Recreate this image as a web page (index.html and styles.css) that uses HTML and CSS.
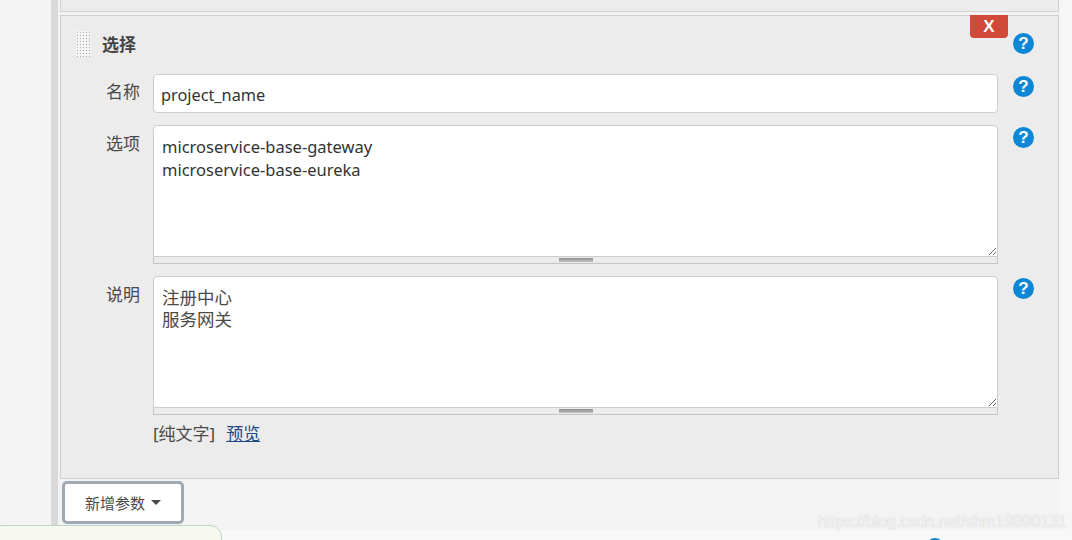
FILE: index.html
```html
<!DOCTYPE html>
<html lang="zh-CN">
<head>
  <meta charset="UTF-8" />
  <title>选择参数</title>
  <link rel="stylesheet" href="styles.css">
</head>
<body>

  <div class="page">
    <div class="rail"></div>

    <div class="main">
      <div class="prev-card"></div>

      <div class="card">
        <button class="delete-btn">X</button>

        <div class="card-head">
          <div class="handle"></div>
          <div class="card-title">选择</div>
          <span class="help">?</span>
        </div>

        <div class="row row-name">
          <label class="row-label">名称</label>
          <input class="field" type="text" value="project_name" />
          <span class="help">?</span>
        </div>

        <div class="row row-choices">
          <label class="row-label">选项</label>
          <div class="area-wrap">
            <textarea class="area">microservice-base-gateway
microservice-base-eureka</textarea>
            <div class="area-grip"><i></i></div>
          </div>
          <span class="help">?</span>
        </div>

        <div class="row row-desc">
          <label class="row-label">说明</label>
          <div class="area-wrap">
            <textarea class="area area-cjk">注册中心
服务网关</textarea>
            <div class="area-grip"><i></i></div>
          </div>
          <span class="help">?</span>
        </div>

        <div class="row row-links">
          <span></span>
          <div class="links">[纯文字]<a href="#">预览</a></div>
        </div>
      </div>

      <button class="add-btn">新增参数<span class="caret"></span></button>
    </div>

    <div class="right-edge"></div>
  </div>

  <div class="footer"><span class="footer-dot"></span></div>
  <div class="notice"></div>
  <div class="watermark">https://blog.csdn.net/shm19990131</div>

</body>
</html>
```

FILE: styles.css
```css
html, body {
  margin: 0;
  padding: 0;
  overflow: hidden;
}

body {
  width: 1072px;
  height: 540px;
  position: relative;
  background: #f8f8f8;
  font-family: "Noto Sans", "Noto Sans CJK SC", sans-serif;
  color: #333;
}

.page {
  display: flex;
  height: 530px;
  background: #f3f3f3;
}

.rail {
  width: 51px;
  background: #f4f4f4;
  border-right: 7px solid #d9d9d9;
}

.main {
  width: 1001px;
  padding-left: 2px;
  box-sizing: border-box;
}

.right-edge {
  width: 12px;
  margin-left: 1px;
  background: #f6f6f6;
}

.prev-card {
  height: 11px;
  background: #ececec;
  border: 1px solid #d2d2d2;
  border-top: none;
}

.card {
  position: relative;
  height: 464px;
  margin-top: 3px;
  box-sizing: border-box;
  background: #ececec;
  border: 1px solid #d0d0d0;
}

.delete-btn {
  position: absolute;
  top: -1px;
  right: 50px;
  width: 38px;
  height: 23px;
  padding: 0;
  border: none;
  border-radius: 0 0 4px 4px;
  background: #d24939;
  color: #fff;
  font-family: "Liberation Sans", sans-serif;
  font-size: 17px;
  font-weight: bold;
}

.card-head {
  display: flex;
  align-items: center;
  height: 54px;
  margin-bottom: 4px;
  padding-left: 15px;
}

.handle {
  width: 15px;
  height: 26px;
  margin-top: 2px;
  background-color: #f4f4f4;
  background-image: radial-gradient(circle, #a8a8a8 1px, transparent 1px);
  background-size: 3px 3px;
}

.card-title {
  margin-left: 11px;
  font-size: 17px;
  font-weight: bold;
  color: #444;
}

.card-head .help {
  margin-left: auto;
  margin-right: 24px;
}

.row {
  display: grid;
  grid-template-columns: 80px 845px 60px;
  column-gap: 12px;
  align-items: start;
}

.row .help {
  margin-top: 2px;
  margin-left: 3px;
}

.row-choices,
.row-desc {
  margin-top: 12px;
}

.row-label {
  margin-right: 1px;
  text-align: right;
  font-size: 17px;
  line-height: 36px;
  color: #4a4a4a;
}

.row-choices .row-label,
.row-desc .row-label {
  line-height: 38px;
}

.field {
  display: block;
  width: 845px;
  height: 39px;
  box-sizing: border-box;
  padding: 3px 7px 0;
  border: 1px solid #cdcdcd;
  border-radius: 4px;
  background: #fff;
  color: #333;
  font-family: inherit;
  font-size: 16.3px;
  outline: none;
}

.area-wrap {
  width: 845px;
}

.area {
  display: block;
  width: 845px;
  height: 132px;
  box-sizing: border-box;
  padding: 9px 8px;
  border: 1px solid #cdcdcd;
  border-radius: 4px 4px 0 0;
  background: #fff;
  color: #333;
  font-family: inherit;
  font-size: 16.5px;
  line-height: 23px;
  outline: none;
  resize: vertical;
}

.area-cjk {
  color: #4a4a4a;
  font-size: 17.5px;
  line-height: 22px;
}

.area-grip {
  display: flex;
  justify-content: center;
  align-items: center;
  height: 7px;
  box-sizing: border-box;
  background: #ececec;
  border: 1px solid #c4c4c0;
  border-top: none;
}

.area-grip i {
  display: block;
  width: 34px;
  height: 4px;
  background: linear-gradient(#8c8c8c, #c4c4c4);
}

.help {
  display: block;
  width: 21px;
  height: 21px;
  border-radius: 50%;
  background: #0b87d6;
  color: #fff;
  font-family: "Liberation Sans", sans-serif;
  font-size: 17px;
  font-weight: bold;
  line-height: 21px;
  text-align: center;
}

.row-links {
  margin-top: 5px;
}

.links {
  font-size: 17px;
  line-height: 28px;
  color: #4a4a4a;
}

.links a {
  margin-left: 11px;
  color: #204a87;
  text-decoration: underline;
}

.add-btn {
  display: flex;
  align-items: center;
  justify-content: center;
  gap: 6px;
  width: 122px;
  height: 43px;
  margin-top: 2px;
  margin-left: 2px;
  padding: 0;
  box-sizing: border-box;
  border: 3px solid #9ea9b3;
  border-radius: 5px;
  background: #fff;
  color: #4a4a4a;
  font-family: inherit;
  font-size: 15px;
}

.caret {
  width: 0;
  height: 0;
  border-left: 5px solid transparent;
  border-right: 5px solid transparent;
  border-top: 5px solid #4a4a4a;
}

.footer {
  height: 10px;
  position: relative;
  overflow: hidden;
}

.footer-dot {
  position: absolute;
  left: 926px;
  top: 8px;
  width: 18px;
  height: 18px;
  border-radius: 50%;
  background: #0b87d6;
}

.notice {
  position: absolute;
  left: -10px;
  top: 525px;
  width: 230px;
  height: 30px;
  background: #f7f8ef;
  border: 1px solid #bcd6c4;
  border-radius: 12px;
}

.watermark {
  position: absolute;
  right: 5px;
  top: 513px;
  font-family: "Liberation Sans", sans-serif;
  font-size: 16px;
  color: rgba(255, 255, 255, 0.8);
  text-shadow: 0 0 1px rgba(150, 150, 150, 0.6);
}
```
